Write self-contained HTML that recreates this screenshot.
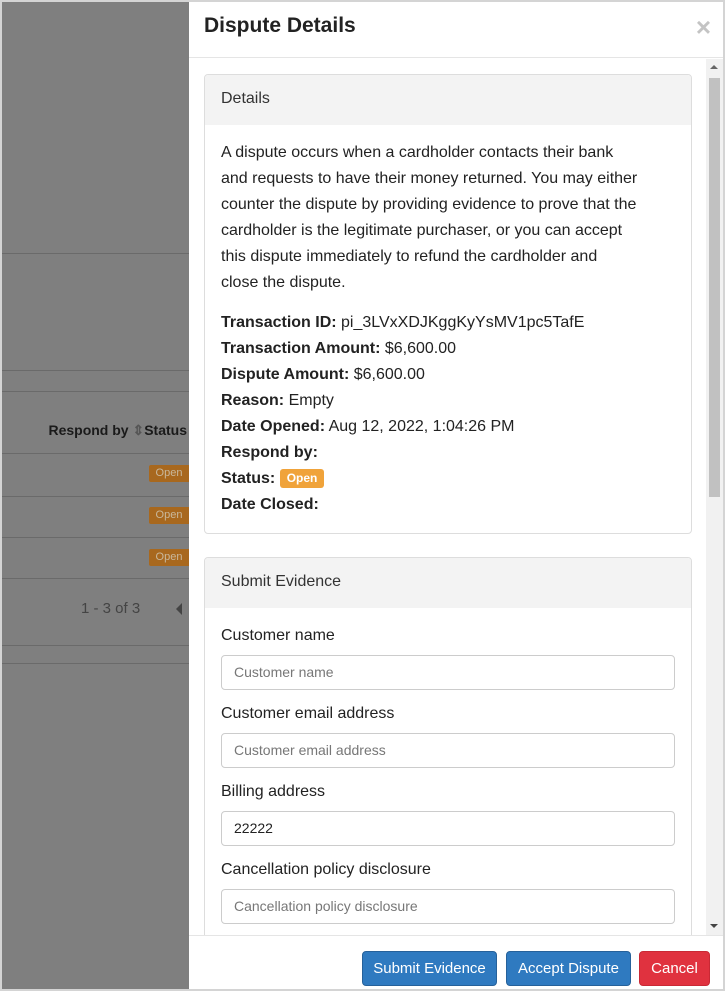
<!DOCTYPE html>
<html><head><meta charset="utf-8"><style>
*{box-sizing:border-box;margin:0;padding:0}
body{width:725px;height:991px;position:relative;overflow:hidden;background:#d4d4d4;font-family:"Liberation Sans",Arial,sans-serif;color:#222}
.bg{position:absolute;left:2px;top:2px;width:187px;height:987px;background:#7f7f7f}
.hl{position:absolute;left:0;width:187px;height:1px;background:#6a6a6a}
.badge{position:absolute;right:0;width:40px;height:17px;background:#a8681e;color:#c9b89c;font-size:11px;text-align:center;line-height:17px;border-radius:2px 0 0 2px}
.modal{position:absolute;left:189px;top:2px;width:534px;height:987px;background:#fff}
.hdr{height:56px;border-bottom:1px solid #e5e5e5;position:relative}
.hdr h1{position:absolute;left:15px;top:12px;font-size:21px;color:#222;font-weight:600}
.close{position:absolute;right:12px;top:10px;font-size:26px;color:#c4c4c4;font-weight:bold}
.body{position:absolute;left:0;top:57px;width:534px;height:876px;overflow:hidden}
.card{position:absolute;left:15px;width:488px;border:1px solid #ddd;border-radius:4px;overflow:hidden}
.ch{background:#f3f3f3;height:50px;line-height:48px;padding-left:16px;font-size:16px;color:#333}
.cb{padding:16px;font-size:16px;line-height:26px}
b{font-weight:bold}
.lbl{font-size:16px;line-height:22px}
.inp{height:35px;border:1px solid #ccc;border-radius:4px;padding-left:12px;line-height:33px;font-size:14px;color:#777;margin:8px 0 13px}
.ftr{position:absolute;left:0;top:933px;width:534px;height:54px;border-top:1px solid #e5e5e5;background:#fff}
.btn{position:absolute;top:15px;height:35px;border-radius:4px;color:#fff;font-size:15px;text-align:center;line-height:33px}
.sb{position:absolute;left:517px;top:57px;width:17px;height:876px;background:#f1f1f1}
</style></head><body>
<div class="bg">
<div class="hl" style="top:251px"></div>
<div class="hl" style="top:368px"></div>
<div class="hl" style="top:389px"></div>
<div style="position:absolute;right:2px;top:420px;font-size:14px;font-weight:bold;color:#1a1a1a">Respond by <span style="color:#555">⇕</span>Status</div>
<div class="hl" style="top:451px"></div>
<div class="badge" style="top:463px">Open</div>
<div class="hl" style="top:494px"></div>
<div class="badge" style="top:505px">Open</div>
<div class="hl" style="top:535px"></div>
<div class="badge" style="top:547px">Open</div>
<div class="hl" style="top:576px"></div>
<div style="position:absolute;left:79px;top:598px;font-size:15px;color:#444">1 - 3 of 3</div>
<div style="position:absolute;left:174px;top:601px;width:0;height:0;border-top:6px solid transparent;border-bottom:6px solid transparent;border-right:6px solid #444"></div>
<div class="hl" style="top:643px"></div>
<div class="hl" style="top:661px"></div>
</div>
<div class="modal">
<div class="hdr"><h1>Dispute Details</h1><div class="close">×</div></div>
<div class="body">
<div class="card" style="top:15px;height:460px">
<div class="ch">Details</div>
<div class="cb">
<div style="margin-top:-1px;white-space:nowrap">A dispute occurs when a cardholder contacts their bank<br>and requests to have their money returned. You may either<br>counter the dispute by providing evidence to prove that the<br>cardholder is the legitimate purchaser, or you can accept<br>this dispute immediately to refund the cardholder and<br>close the dispute.</div>
<div style="margin-top:14px"><b>Transaction ID:</b> pi_3LVxXDJKggKyYsMV1pc5TafE</div>
<div><b>Transaction Amount:</b> $6,600.00</div>
<div><b>Dispute Amount:</b> $6,600.00</div>
<div><b>Reason:</b> Empty</div>
<div><b>Date Opened:</b> Aug 12, 2022, 1:04:26 PM</div>
<div><b>Respond by:</b></div>
<div><b>Status:</b> <span style="display:inline-block;background:#f0a33a;color:#fff;font-size:12px;font-weight:bold;line-height:19px;padding:0 7px;border-radius:3px;vertical-align:1px">Open</span></div>
<div><b>Date Closed:</b></div>
</div></div>
<div class="card" style="top:498px;height:420px">
<div class="ch">Submit Evidence</div>
<div class="cb" style="padding-top:17px">
<div class="lbl">Customer name</div><div class="inp">Customer name</div>
<div class="lbl">Customer email address</div><div class="inp">Customer email address</div>
<div class="lbl">Billing address</div><div class="inp" style="color:#222">22222</div>
<div class="lbl">Cancellation policy disclosure</div><div class="inp">Cancellation policy disclosure</div>
</div></div>
</div>
<div class="sb"><div style="position:absolute;left:3px;top:19px;width:11px;height:419px;background:#c1c1c1"></div>
<div style="position:absolute;left:4px;top:6px;border-left:4px solid transparent;border-right:4px solid transparent;border-bottom:4px solid #666"></div>
<div style="position:absolute;left:4px;top:865px;border-left:4px solid transparent;border-right:4px solid transparent;border-top:4px solid #444"></div></div>
<div class="ftr">
<div class="btn" style="left:173px;width:135px;background:#2f7ac0;border:1px solid #26619a">Submit Evidence</div>
<div class="btn" style="left:317px;width:125px;background:#2f7ac0;border:1px solid #26619a">Accept Dispute</div>
<div class="btn" style="left:450px;width:71px;background:#e0323f;border:1px solid #c92935">Cancel</div>
</div>
</div>
</body></html>
